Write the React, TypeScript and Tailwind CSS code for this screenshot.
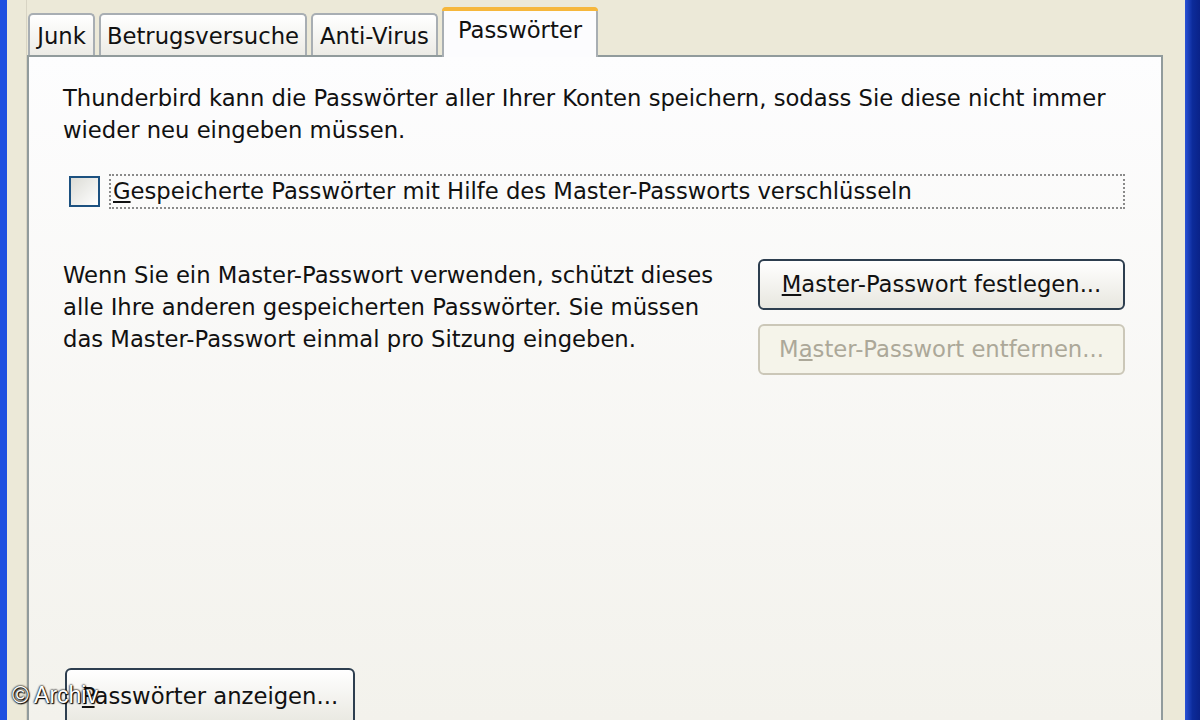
import React from 'react';

// XP-style "Passwörter" tab of the Thunderbird security options (2x zoomed screenshot)

const font = { fontFamily: '"DejaVu Sans", "Liberation Sans", sans-serif' };

const tabs = [
    { label: 'Junk', w: 'w-[67px]' },
    { label: 'Betrugsversuche', w: 'w-[208px]' },
    { label: 'Anti-Virus', w: 'w-[127px]' },
];

const XpButton: React.FC<{ children: React.ReactNode; disabled?: boolean; className?: string }> = ({ children, disabled, className }) => (
    <div
        className={`flex items-center justify-center rounded-[6px] border-2 text-[22.7px] ${disabled
            ? 'border-[#cbc7b8] bg-[#f5f4ea] text-[#aca899]'
            : 'border-[#2d3e4f] bg-gradient-to-b from-white to-[#e8e7df] text-[#111]'
            } ${className ?? ''}`}
    >
        {children}
    </div>
);

export default function App() {
    return (
        <div className="w-[1200px] h-[720px] flex overflow-hidden bg-[#ece9d8] relative" style={font}>
            {/* window frame left */}
            <div className="w-[7px] h-full bg-[#1e50e0]" />
            <div className="w-[20px] h-full bg-[#ece9d8] border-r border-[#d8d4c4]" />

            <div className="flex-1 flex flex-col">
                {/* tab strip */}
                <div className="h-[55px] flex items-end pl-[1px] shrink-0">
                    {tabs.map(t => (
                        <div
                            key={t.label}
                            className={`${t.w} h-[43px] mr-[4px] -mb-[1px] flex items-start pt-[4px] justify-center rounded-t-[5px] border-2 border-b-0 border-[#a8aeb3] bg-gradient-to-b from-white to-[#ecebe5] text-[22.7px] text-[#111]`}
                        >
                            {t.label}
                        </div>
                    ))}
                    <div className="w-[156px] h-[50px] -mb-[2px] flex flex-col rounded-t-[5px] border-x-2 border-[#a8aeb3] bg-[#fcfcfe] relative z-10">
                        <div className="h-[4px] bg-[#f6b73c] rounded-t-[4px] -mx-[2px]" />
                        <div className="flex-1 flex items-start justify-center pt-[2px] text-[22.7px] text-[#111]">Passwörter</div>
                    </div>
                </div>

                {/* panel */}
                <div className="flex-1 border-2 border-b-0 border-[#919b9c] bg-gradient-to-b from-[#fdfdfe] to-[#f3f2ec] pl-[34px] pr-[36px] pt-[25px] flex flex-col">
                    <p className="text-[22.7px] leading-[32px] text-[#111]">
                        Thunderbird kann die Passwörter aller Ihrer Konten speichern, sodass Sie diese nicht immer wieder neu eingeben müssen.
                    </p>

                    <div className="mt-[28px] flex items-center">
                        <div className="w-[31px] h-[31px] ml-[6px] border-2 border-[#1c5180] bg-gradient-to-br from-[#dcdcd6] to-white" />
                        <div className="ml-[9px] flex-1 h-[35px] flex items-center border-2 border-dotted border-[#8a8a8a] pl-[2px] text-[22.7px] text-[#111]">
                            <span><span className="underline">G</span>espeicherte Passwörter mit Hilfe des Master-Passworts verschlüsseln</span>
                        </div>
                    </div>

                    <div className="mt-[50px] flex justify-between">
                        <p className="w-[672px] text-[22.7px] leading-[32px] text-[#111]">
                            Wenn Sie ein Master-Passwort verwenden, schützt dieses alle Ihre anderen gespeicherten Passwörter. Sie müssen das Master-Passwort einmal pro Sitzung eingeben.
                        </p>
                        <div className="flex flex-col gap-[14px]">
                            <XpButton className="w-[367px] h-[51px]">
                                <span><span className="underline">M</span>aster-Passwort festlegen...</span>
                            </XpButton>
                            <XpButton disabled className="w-[367px] h-[51px]">
                                <span>M<span className="underline">a</span>ster-Passwort entfernen...</span>
                            </XpButton>
                        </div>
                    </div>

                    <div className="mt-auto">
                        <XpButton className="w-[290px] h-[60px] -mb-[8px] ml-[2px] items-start pt-[9px]">
                            <span><span className="underline">P</span>asswörter anzeigen...</span>
                        </XpButton>
                    </div>
                </div>
            </div>

            {/* window frame right */}
            <div className="w-[22px] h-full bg-[#ece9d8]" />
            <div className="w-[15px] h-full bg-gradient-to-r from-[#2a52d8] via-[#0c2b9a] to-[#0a2288]" />

            {/* watermark */}
            <div
                className="absolute left-[12px] bottom-[8px] text-[23px] text-white"
                style={{ fontFamily: '"Liberation Sans", Arial, sans-serif', textShadow: '0 0 2px #000, 0 0 2px #000, 1px 1px 1px #000' }}
            >
                © Archiv
            </div>
        </div>
    );
}
